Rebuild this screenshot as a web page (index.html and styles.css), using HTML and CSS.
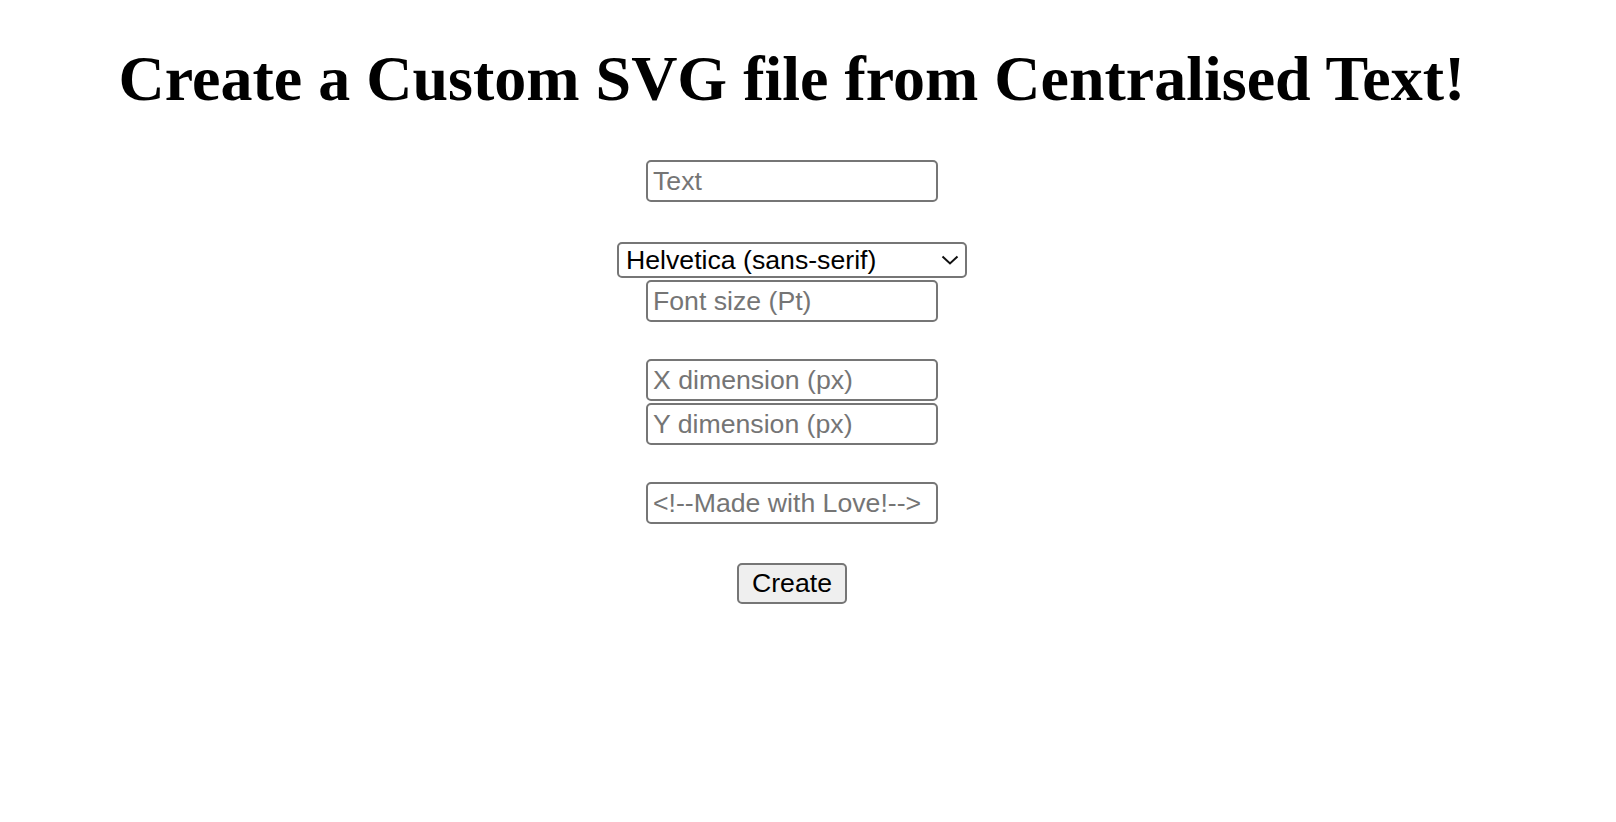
FILE: index.html
```
<!DOCTYPE html>
<html lang="en">
<head>
<meta charset="utf-8">
<title>Custom SVG from Centralised Text</title>
<link rel="stylesheet" href="styles.css">
</head>
<body>
<main class="page">
  <h1 class="title">Create a Custom SVG file from Centralised Text!</h1>
  <form class="form">
    <div class="group group-text">
      <input class="field" type="text" placeholder="Text">
    </div>
    <div class="group group-font">
      <span class="select-wrap">
        <select class="select">
          <option>Helvetica (sans-serif)</option>
          <option>Times (serif)</option>
          <option>Courier (monospace)</option>
        </select>
        <svg class="chevron" width="18" height="10" viewBox="0 0 18 10" aria-hidden="true"><path d="M1.5 1.5 L9 8.5 L16.5 1.5" fill="none" stroke="#111" stroke-width="2"/></svg>
      </span>
      <input class="field" type="text" placeholder="Font size (Pt)">
    </div>
    <div class="group group-dims">
      <input class="field" type="text" placeholder="X dimension (px)">
      <input class="field" type="text" placeholder="Y dimension (px)">
    </div>
    <div class="group group-comment">
      <input class="field" type="text" placeholder="<!--Made with Love!-->">
    </div>
    <div class="group group-button">
      <button class="button" type="button">Create</button>
    </div>
  </form>
</main>
</body>
</html>
```
FILE: styles.css
```
html, body {
  margin: 0;
  padding: 0;
  background: #ffffff;
}

.page {
  width: 1584px;
  display: flex;
  flex-direction: column;
  align-items: center;
  font-family: "Liberation Serif", "Times New Roman", serif;
}

.title {
  margin: 47px 0 0;
  font-size: 64px;
  line-height: 64px;
  font-weight: bold;
  color: #000;
  white-space: nowrap;
}

.form {
  display: flex;
  flex-direction: column;
  align-items: center;
  margin-top: 49px;
}

.group {
  display: flex;
  flex-direction: column;
  align-items: center;
  gap: 2px;
}

.group-font { margin-top: 40px; }
.group-dims { margin-top: 37px; }
.group-comment { margin-top: 37px; }
.group-button { margin-top: 39px; }

.field {
  box-sizing: border-box;
  width: 292px;
  height: 42px;
  margin: 0;
  padding: 2px 5px;
  border: 2px solid #767676;
  border-radius: 5px;
  background: #fff;
  font-family: "Liberation Sans", Arial, sans-serif;
  font-size: 26.67px;
  color: #000;
  outline: none;
}

.field::placeholder {
  color: #757575;
  opacity: 1;
}

.select-wrap {
  position: relative;
  display: block;
}

.select {
  box-sizing: border-box;
  width: 350px;
  height: 36px;
  margin: 0;
  padding: 0 30px 0 7px;
  border: 2px solid #767676;
  border-radius: 5px;
  background: #fff;
  font-family: "Liberation Sans", Arial, sans-serif;
  font-size: 26.67px;
  color: #000;
  appearance: none;
  -webkit-appearance: none;
  outline: none;
}

.chevron {
  position: absolute;
  right: 8px;
  top: 13px;
  pointer-events: none;
}

.button {
  box-sizing: border-box;
  width: 110px;
  height: 41px;
  margin: 0;
  padding: 0;
  border: 2px solid #767676;
  border-radius: 5px;
  background: #efefef;
  font-family: "Liberation Sans", Arial, sans-serif;
  font-size: 26.67px;
  color: #000;
}
```
